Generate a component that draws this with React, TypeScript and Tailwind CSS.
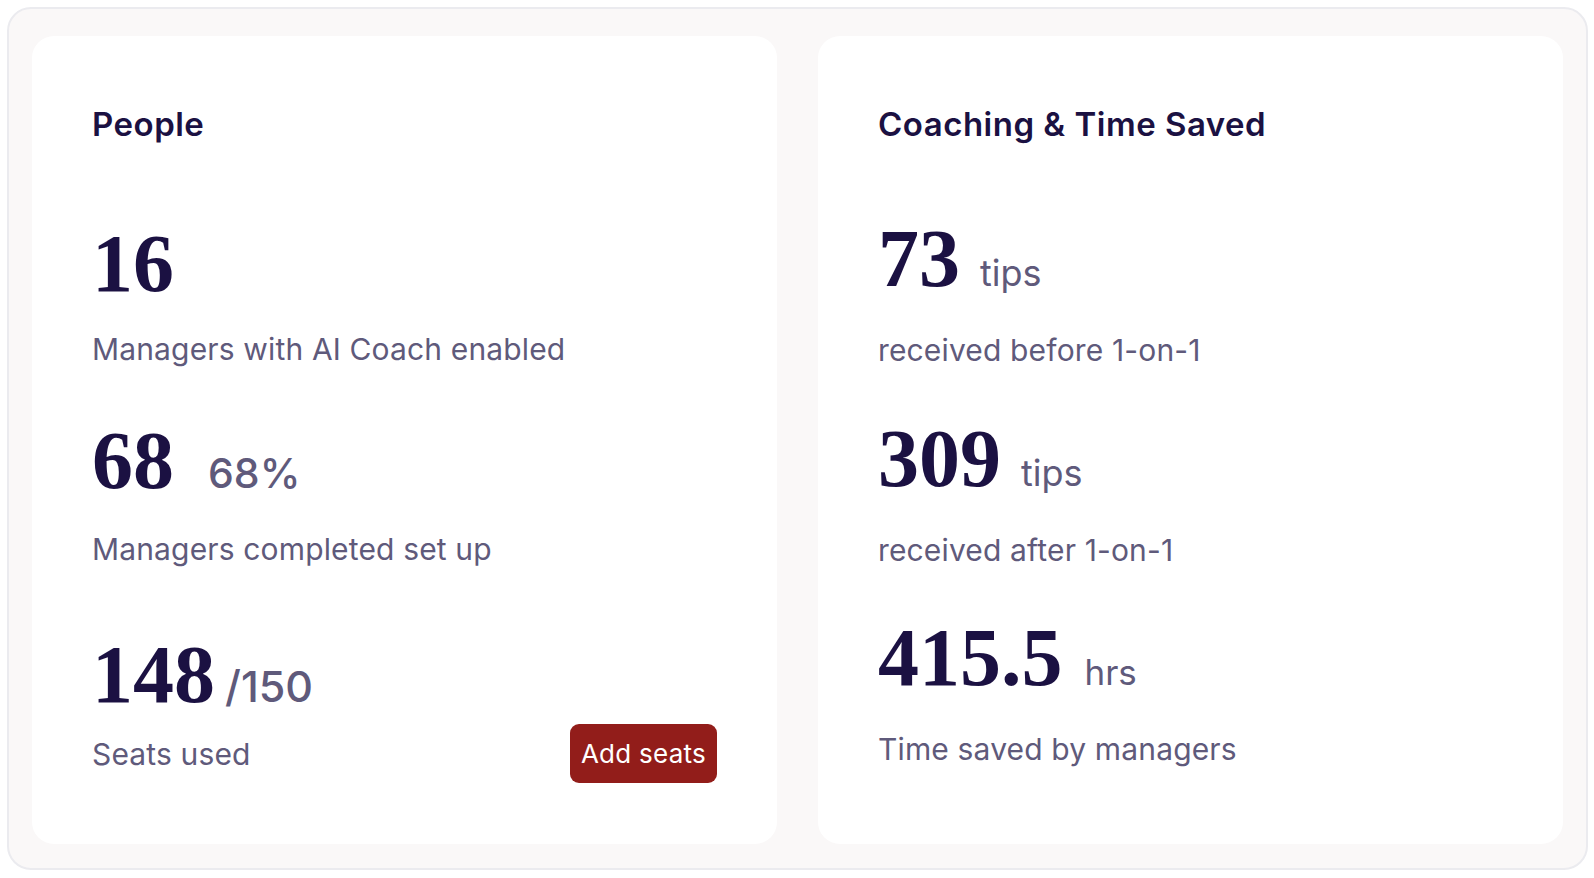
import React from 'react';

const SANS = "font-['Inter','Lato',sans-serif]";
const SERIF = "font-['Liberation_Serif',serif]";

type Stat = {
  value: string;
  unit?: string;
  unitClass: string;
  label: string;
  topClass: string;
  labelClass: string;
};

const StatBlock: React.FC<{ stat: Stat; action?: React.ReactNode }> = ({ stat, action }) => (
  <div className={stat.topClass}>
    <div className="flex items-baseline">
      <span className={`${SERIF} text-[82px] leading-[82px] font-bold text-[#1b1142]`}>{stat.value}</span>
      {stat.unit && <span className={`${SANS} ${stat.unitClass} text-[#5f5a7b]`}>{stat.unit}</span>}
    </div>
    {action ? (
      <div className={`flex items-center justify-between ${stat.labelClass}`}>
        <span className={`${SANS} text-[30px] leading-[40px] tracking-[0.005em] text-[#5f5a7b]`}>{stat.label}</span>
        {action}
      </div>
    ) : (
      <div className={`${SANS} text-[30px] leading-[40px] tracking-[0.005em] text-[#5f5a7b] ${stat.labelClass}`}>
        {stat.label}
      </div>
    )}
  </div>
);

const peopleStats: Stat[] = [
  { value: '16', unitClass: '', label: 'Managers with AI Coach enabled', topClass: 'mt-[71px]', labelClass: 'mt-[24px]' },
  { value: '68', unit: '68%', unitClass: 'ml-[34px] text-[41px] font-medium', label: 'Managers completed set up', topClass: 'mt-[51px]', labelClass: 'mt-[24px]' },
];

const seatStat: Stat = {
  value: '148',
  unit: '/150',
  unitClass: 'ml-[10px] text-[43px] font-medium',
  label: 'Seats used',
  topClass: 'mt-[65px]',
  labelClass: 'mt-[6px]',
};

const coachingStats: Stat[] = [
  { value: '73', unit: 'tips', unitClass: 'ml-[20px] text-[36px]', label: 'received before 1-on-1', topClass: 'mt-[66px]', labelClass: 'mt-[30px]' },
  { value: '309', unit: 'tips', unitClass: 'ml-[20px] text-[36px]', label: 'received after 1-on-1', topClass: 'mt-[48px]', labelClass: 'mt-[30px]' },
  { value: '415.5', unit: 'hrs', unitClass: 'ml-[22px] text-[35px]', label: 'Time saved by managers', topClass: 'mt-[47px]', labelClass: 'mt-[30px]' },
];

const Card: React.FC<{ title: string; children: React.ReactNode }> = ({ title, children }) => (
  <div className="flex-1 bg-white rounded-[22px] p-[60px] flex flex-col">
    <h2 className={`${SANS} text-[33px] leading-[56px] tracking-[0.015em] font-semibold text-[#1b1142]`}>{title}</h2>
    {children}
  </div>
);

export default function App() {
  return (
    <div className="w-[1594px] h-[878px] bg-white p-[7px]">
      <div className="h-[863px] w-[1581px] rounded-[24px] border-2 border-[#ebebef] bg-[#faf8f8] px-[23px] pt-[27px] pb-[24px] flex gap-[41px]">
        <Card title="People">
          {peopleStats.map((s) => (
            <StatBlock key={s.label} stat={s} />
          ))}
          <StatBlock
            stat={seatStat}
            action={
              <button className={`${SANS} h-[59px] w-[147px] rounded-[9px] bg-[#921d1a] text-[26px] tracking-[0.01em] text-white`}>
                Add seats
              </button>
            }
          />
        </Card>
        <Card title="Coaching & Time Saved">
          {coachingStats.map((s) => (
            <StatBlock key={s.label} stat={s} />
          ))}
        </Card>
      </div>
    </div>
  );
}
